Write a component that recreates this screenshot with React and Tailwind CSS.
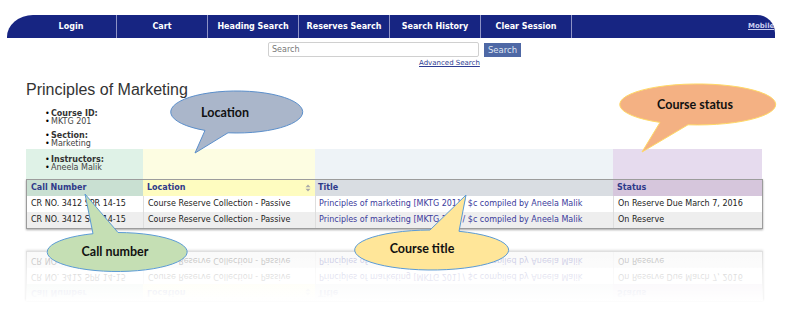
import React from "react";

const navItems = ["Login", "Cart", "Heading Search", "Reserves Search", "Search History", "Clear Session"];

const rows = [
  {
    call: "CR NO. 3412 SPR 14-15",
    location: "Course Reserve Collection - Passive",
    title: "Principles of marketing [MKTG 201] / $c compiled by Aneela Malik",
    status: "On Reserve Due March 7, 2016",
    bg: "bg-white",
  },
  {
    call: "CR NO. 3412 SPR 14-15",
    location: "Course Reserve Collection - Passive",
    title: "Principles of marketing [MKTG 201] / $c compiled by Aneela Malik",
    status: "On Reserve",
    bg: "bg-[#eeeeee]",
  },
];

// bubbles: ellipse + tail drawn as one outline
const bubbles = [
  {
    d: "M205 130.4 A66 21 0 1 1 228 132.8 L195 153 Z",
    fill: "#aab6ca",
    stroke: "#5b8fcb",
    text: "Location",
    tx: 225,
    ty: 112,
  },
  {
    d: "M660 122.4 A78 20.5 0 1 1 688 124.8 L642 152 Z",
    fill: "#f4b183",
    stroke: "#ffd966",
    text: "Course status",
    tx: 695,
    ty: 104,
  },
  {
    d: "M93 233.7 A70 19.5 0 1 0 118 232.5 L85 194 Z",
    fill: "#c5dfb4",
    stroke: "#5b9bd5",
    text: "Call number",
    tx: 115,
    ty: 251,
  },
  {
    d: "M430 230 A77 20 0 1 0 459 231.3 L466 195 Z",
    fill: "#ffe699",
    stroke: "#5b9bd5",
    text: "Course title",
    tx: 422,
    ty: 248,
  },
];

function SortIcon() {
  return (
    <svg width="6" height="8" viewBox="0 0 6 8">
      <path d="M3 0.5 L5.5 3.3 L0.5 3.3 Z" fill="#a9a9a9" />
      <path d="M3 7.5 L5.5 4.7 L0.5 4.7 Z" fill="#a9a9a9" />
    </svg>
  );
}

function ReserveTable() {
  return (
    <div className="w-[737px] border border-[#9c9c9c] shadow-[0_1px_2px_rgba(0,0,0,0.35)] text-[8px]">
      <div className="grid grid-cols-[116px_172px_298px_149px] h-[16px] font-bold text-[#2f3a8a]">
        <div className="bg-[#c9e0d2] pl-[4px] flex items-center">Call Number</div>
        <div className="bg-[#fefcc0] pl-[4px] pr-[4px] flex items-center justify-between">
          Location
          <SortIcon />
        </div>
        <div className="bg-[#d9dde2] pl-[3px] flex items-center">Title</div>
        <div className="bg-[#d6c6dc] pl-[4px] flex items-center">Status</div>
      </div>
      {rows.map((r, i) => (
        <div key={i} className={`grid grid-cols-[116px_172px_298px_149px] h-[16px] ${r.bg}`}>
          <div className="pl-[4px] flex items-center text-[#222] whitespace-nowrap">{r.call}</div>
          <div className="pl-[4px] flex items-center text-[#222] border-l border-[#dedede]">{r.location}</div>
          <div className="pl-[3px] flex items-center text-[#3b3b9c] border-l border-[#dedede] whitespace-nowrap">{r.title}</div>
          <div className="pl-[4px] flex items-center text-[#222] border-l border-[#dedede]">{r.status}</div>
        </div>
      ))}
    </div>
  );
}

export default function App() {
  return (
    <div className="relative w-[802px] h-[323px] overflow-hidden bg-white font-['DejaVu_Sans',sans-serif]">
      {/* top nav */}
      <div className="ml-[7px] mt-[15px] w-[768px] h-[23px] bg-[#172582] rounded-tl-[26px_22px] rounded-tr-[18px] flex pl-[19px] overflow-hidden">
        {navItems.map((item) => (
          <div
            key={item}
            className="w-[91px] shrink-0 border-r border-[#8d92c6] flex items-center justify-center text-white font-bold text-[8px]"
          >
            {item}
          </div>
        ))}
        <div className="ml-[176px] self-center shrink-0 text-[7px] font-bold underline text-[#cacef0]">Mobile</div>
      </div>

      {/* search */}
      <div className="flex items-start mt-[4px] pl-[268px]">
        <div className="w-[211px] h-[15px] border border-[#d0d0d0] rounded-[2px] pl-[3px] flex items-center text-[8px] text-[#777]">
          Search
        </div>
        <div className="ml-[5px] mt-[1px] w-[37px] h-[14px] bg-[#4e68a5] text-[#dfe5f2] text-[8.5px] flex items-center justify-center">
          Search
        </div>
      </div>
      <div className="pl-[419px] mt-[2px] text-[7px] leading-[8px] text-[#2d3c93] underline">Advanced Search</div>

      {/* course info */}
      <h1 className="ml-[26px] mt-[14px] text-[16px] leading-[18px] text-[#333] font-['Liberation_Sans',Arial,sans-serif]">
        Principles of Marketing
      </h1>
      <div className="ml-[45px] mt-[11px] text-[8px] leading-[8px]">
        <div className="flex">
          <span className="w-[6px]">•</span>
          <span className="font-bold text-[#333]">Course ID:</span>
        </div>
        <div className="flex">
          <span className="w-[6px]">•</span>
          <span className="text-[#444]">MKTG 201</span>
        </div>
        <div className="flex mt-[6px]">
          <span className="w-[6px]">•</span>
          <span className="font-bold text-[#333]">Section:</span>
        </div>
        <div className="flex">
          <span className="w-[6px]">•</span>
          <span className="text-[#444]">Marketing</span>
        </div>
      </div>

      {/* coloured column bands */}
      <div className="ml-[26px] mt-[1px] grid grid-cols-[117px_172px_298px_149px] h-[30px]">
        <div className="bg-[#dff2e7] pl-[19px] pt-[7px] text-[8px] leading-[8px]">
          <div className="flex">
            <span className="w-[6px]">•</span>
            <span className="font-bold text-[#333]">Instructors:</span>
          </div>
          <div className="flex">
            <span className="w-[6px]">•</span>
            <span className="text-[#444]">Aneela Malik</span>
          </div>
        </div>
        <div className="bg-[#fdfde2]" />
        <div className="bg-[#eef3f7]" />
        <div className="bg-[#e6dbee]" />
      </div>

      <div className="ml-[26px]">
        <ReserveTable />
      </div>

      {/* reflection */}
      <div className="relative ml-[26px] mt-[22px] w-[737px]">
        <div className="[transform:scaleY(-1)] opacity-[0.35]">
          <ReserveTable />
        </div>
        <div className="absolute inset-0 bg-linear-to-b from-white/10 via-white/60 to-white" />
      </div>

      {/* callouts */}
      <svg className="absolute inset-0 pointer-events-none" width="802" height="323">
        {bubbles.map((b) => (
          <g key={b.text}>
            <path d={b.d} fill={b.fill} stroke={b.stroke} strokeWidth="1" />
            <text
              x={b.tx}
              y={b.ty}
              textAnchor="middle"
              dominantBaseline="central"
              className="font-['Lato',sans-serif] font-bold text-[12.5px]"
              fill="#111"
            >
              {b.text}
            </text>
          </g>
        ))}
      </svg>
    </div>
  );
}
